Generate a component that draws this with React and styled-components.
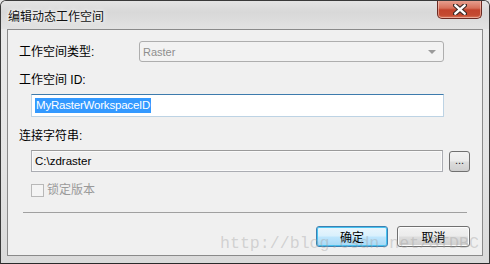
import styled, { createGlobalStyle } from "styled-components";

const Global = createGlobalStyle`
    html, body {
        margin: 0;
        padding: 0;
        background: #e6e6e6;
    }
    body {
        font-family: "Liberation Sans", "Noto Sans CJK SC", sans-serif;
        font-size: 12px;
    }
`;

const Window = styled.div`
    position: relative;
    width: 490px;
    height: 264px;
    box-sizing: border-box;
    border: 1px solid #3a3a3a;
    border-bottom-color: #2a2a2a;
    border-radius: 6px 6px 0 0;
    background: linear-gradient(180deg, #d6d6d6 0%, #e9e9e9 8%, #e4e4e4 60%, #dadada 100%);
    display: flex;
    flex-direction: column;
    padding: 0 6px 7px 6px;
    overflow: hidden;
`;

const TitleBar = styled.div`
    height: 28px;
    display: flex;
    justify-content: space-between;
    align-items: flex-start;
    background: linear-gradient(180deg, #e4e4e4 0%, #d8d8d8 40%, #e2e2e2 100%);
    margin: 0 -6px;
    padding: 0 7px 0 7px;
`;

const Title = styled.div`
    font-family: "Noto Sans CJK SC", sans-serif;
    font-size: 12px;
    line-height: 14px;
    margin-top: 8px;
    color: #111;
    text-shadow: 0 0 6px #fff, 0 0 3px #fff;
`;

const CloseButton = styled.div`
    width: 45px;
    height: 19px;
    margin-top: -1px;
    box-sizing: border-box;
    border: 1px solid #6b2a22;
    border-top: none;
    border-radius: 0 0 5px 5px;
    background: linear-gradient(180deg, #e9a595 0%, #d7705a 45%, #c2432c 55%, #c44a30 85%, #d97a5e 100%);
    display: flex;
    align-items: center;
    justify-content: center;
    box-shadow: inset 0 0 0 1px rgba(255, 220, 210, 0.5);
`;

const Client = styled.div`
    flex: 1;
    box-sizing: border-box;
    border: 1px solid #8a8a8a;
    background: #f0f0f0;
    padding: 11px 12px 0 11px;
    display: flex;
    flex-direction: column;
`;

const Row = styled.div`
    display: flex;
    align-items: center;
    margin-top: ${(p) => p.$mt || 0}px;
    margin-left: ${(p) => p.$indent || 0}px;
`;

const Label = styled.div`
    font-family: "Liberation Sans", "Noto Sans CJK SC", sans-serif;
    font-size: 12px;
    line-height: 16px;
    color: ${(p) => (p.$disabled ? "#9a9a9a" : "#000")};
    width: ${(p) => (p.$w ? `${p.$w}px` : "auto")};
    flex-shrink: 0;
`;

const Combo = styled.div`
    width: 305px;
    height: 21px;
    box-sizing: border-box;
    border: 1px solid #aeaeae;
    border-radius: 3px;
    background: #f2f2f2;
    display: flex;
    align-items: center;
    justify-content: space-between;
    padding: 0 7px 0 3px;
    color: #8e8e8e;
    font-family: "Liberation Sans", sans-serif;
    font-size: 11px;
`;

const Arrow = styled.div`
    width: 0;
    height: 0;
    border-left: 4px solid transparent;
    border-right: 4px solid transparent;
    border-top: 4px solid #9a9a9a;
`;

const TextBox = styled.div`
    width: ${(p) => p.$w}px;
    height: ${(p) => p.$h}px;
    box-sizing: border-box;
    border: 1px solid ${(p) => (p.$focus ? "#bdd3e4" : "#abadb3")};
    border-top-color: ${(p) => (p.$focus ? "#3d7bad" : "#9a9a9a")};
    background: ${(p) => (p.$readonly ? "#f0f0f0" : "#fff")};
    box-shadow: ${(p) => (p.$readonly ? "inset 0 0 0 1px #fafafa" : "none")};
    display: flex;
    align-items: center;
    padding-left: 3px;
    font-family: "Liberation Sans", sans-serif;
    font-size: 11.5px;
    color: #000;
`;

const Selected = styled.span`
    background: #3399ff;
    color: #fff;
    line-height: 15px;
    padding: 0 1px;
    letter-spacing: -0.2px;
`;

const SmallButton = styled.div`
    width: 21px;
    height: 21px;
    margin-left: 6px;
    box-sizing: border-box;
    border: 1px solid #707070;
    border-radius: 3px;
    background: linear-gradient(180deg, #f2f2f2 0%, #ebebeb 48%, #dddddd 52%, #cfcfcf 100%);
    display: flex;
    align-items: center;
    justify-content: center;
    font-family: "Liberation Sans", sans-serif;
    font-size: 11px;
    line-height: 11px;
    padding-bottom: 2px;
    color: #222;
`;

const CheckBox = styled.div`
    width: 13px;
    height: 13px;
    box-sizing: border-box;
    border: 1px solid #b8b8b8;
    background: #f4f4f4;
    margin-right: 3px;
`;

const Separator = styled.div`
    height: 1px;
    background: #a0a0a0;
    margin: 14px 3px 0 4px;
`;

const Buttons = styled.div`
    display: flex;
    justify-content: flex-end;
    gap: 9px;
    margin-top: 13px;
`;

const DialogButton = styled.div`
    width: ${(p) => p.$w}px;
    height: 21px;
    box-sizing: border-box;
    border: 1px solid ${(p) => (p.$default ? "#3c7fb1" : "#707070")};
    border-radius: 3px;
    background: ${(p) =>
        p.$default
            ? "linear-gradient(180deg, #eaf6fd 0%, #d9f0fc 48%, #bee6fd 52%, #a7d9f5 100%)"
            : "linear-gradient(180deg, #f2f2f2 0%, #ebebeb 48%, #dddddd 52%, #cfcfcf 100%)"};
    box-shadow: ${(p) => (p.$default ? "inset 0 0 0 1px #48c3f0" : "inset 0 0 0 1px #fcfcfc")};
    display: flex;
    align-items: center;
    justify-content: center;
    font-family: "Noto Sans CJK SC", sans-serif;
    font-size: 12px;
    color: #000;
`;

const Watermark = styled.div`
    position: absolute;
    left: 219px;
    top: 233px;
    font-family: "Liberation Mono", monospace;
    font-size: 16.6px;
    color: rgba(160, 160, 160, 0.4);
    white-space: nowrap;
    pointer-events: none;
`;

const CloseX = () => (
    <svg width="14" height="11" viewBox="0 0 14 11">
        <path
            d="M2 1 L12 10 M12 1 L2 10"
            stroke="#3d2a26"
            strokeWidth="4.5"
            strokeLinecap="round"
        />
        <path
            d="M2.3 1.3 L11.7 9.7 M11.7 1.3 L2.3 9.7"
            stroke="#ffffff"
            strokeWidth="2.4"
            strokeLinecap="round"
        />
    </svg>
);

export default function App() {
    return (
        <>
            <Global />
            <Window>
                <TitleBar>
                    <Title>编辑动态工作空间</Title>
                    <CloseButton>
                        <CloseX />
                    </CloseButton>
                </TitleBar>
                <Client>
                    <Row>
                        <Label $w={120}>工作空间类型:</Label>
                        <Combo>
                            Raster
                            <Arrow />
                        </Combo>
                    </Row>
                    <Row $mt={10}>
                        <Label>工作空间 ID:</Label>
                    </Row>
                    <Row $mt={6} $indent={12}>
                        <TextBox $w={413} $h={23} $focus>
                            <Selected>MyRasterWorkspaceID</Selected>
                        </TextBox>
                    </Row>
                    <Row $mt={11}>
                        <Label>连接字符串:</Label>
                    </Row>
                    <Row $mt={6} $indent={12}>
                        <TextBox $w={413} $h={22} $readonly>
                            C:\zdraster
                        </TextBox>
                        <SmallButton>...</SmallButton>
                    </Row>
                    <Row $mt={10} $indent={12}>
                        <CheckBox />
                        <Label $disabled>锁定版本</Label>
                    </Row>
                    <Separator />
                    <Buttons>
                        <DialogButton $w={72} $default>确定</DialogButton>
                        <DialogButton $w={73}>取消</DialogButton>
                    </Buttons>
                </Client>
                <Watermark>http://blog.csdn.net/STDBC</Watermark>
            </Window>
        </>
    );
}
